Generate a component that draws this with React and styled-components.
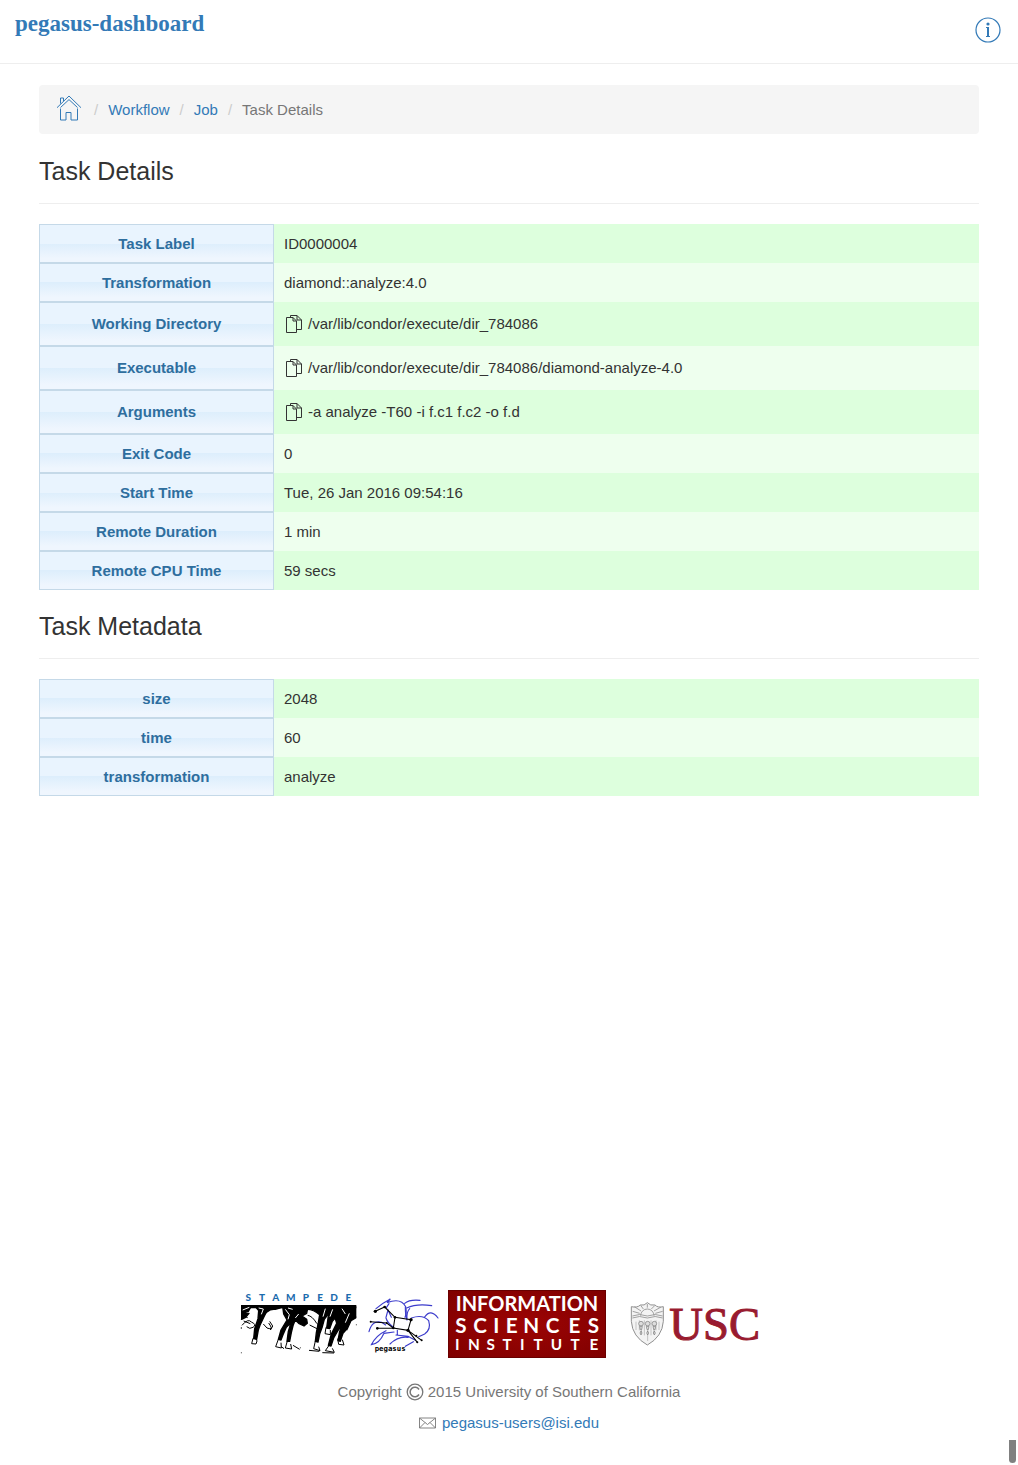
import React from "react";
import styled, { createGlobalStyle } from "styled-components";

const GlobalStyle = createGlobalStyle`
  *, *::before, *::after { box-sizing: border-box; }
  body {
    margin: 0;
    background: #fff;
    color: #333;
    font: 15px/20px "Liberation Sans", Arial, sans-serif;
  }
  a { color: #337ab7; text-decoration: none; }
  a:hover { text-decoration: underline; }
`;

const Page = styled.div`
  display: flex;
  flex-direction: column;
  min-height: 100vh;
`;

const Header = styled.header`
  display: flex;
  justify-content: space-between;
  align-items: flex-start;
  height: 64px;
  padding: 12px 15px;
  border-bottom: 1px solid #eee;
`;

const Brand = styled.a`
  font: bold 23px/24px "Liberation Serif", serif;
`;

const IconButton = styled.button`
  display: inline-flex;
  align-items: center;
  justify-content: center;
  width: ${(p) => p.$size}px;
  height: ${(p) => p.$size}px;
  padding: 0;
  border: 0;
  background: none;
  color: ${(p) => p.$color || "inherit"};
  cursor: pointer;
`;

const HeaderAction = styled.div`
  display: flex;
  padding-top: 3px;
`;

const Main = styled.main`
  flex: 1;
  padding: 21px 39px;
`;

const Breadcrumbs = styled.ol`
  display: flex;
  align-items: center;
  min-height: 49px;
  margin: 0 0 1px;
  padding: 8px 15px;
  list-style: none;
  background: #f5f5f5;
  border-radius: 4px;
`;

const Crumb = styled.li`
  display: flex;
  align-items: center;
  color: #777;

  & + &::before {
    content: "/";
    padding: 0 10px;
    color: #ccc;
  }
`;

const HomeLink = styled.a`
  display: flex;
  justify-content: center;
  width: 30px;
  padding-bottom: 4px;
`;

const SectionTitle = styled.h2`
  margin: 0 0 20px;
  padding: 22px 0 18px;
  border-bottom: 1px solid #eee;
  font-size: 25px;
  line-height: 28px;
  font-weight: 500;
`;

const Table = styled.table`
  width: 100%;
  table-layout: fixed;
  border-collapse: separate;
  border-spacing: 0;
`;

const Row = styled.tr`
  height: 39px;
  background: #eeffee;
  &:nth-child(odd) { background: #ddffdd; }
`;

const Label = styled.th`
  width: 25%;
  padding: 9px 10px;
  border: 1px solid #c5d9e8;
  background: linear-gradient(#e9f4fe 0 50%, #ddeefc 50%, #eff6fe 90%);
  color: #2e6e9e;
  line-height: 18px;
`;

const Value = styled.td`
  padding: 0 10px;
`;

const Copyable = styled.div`
  display: flex;
  align-items: center;
  gap: 4px;
  min-height: 44px;
`;

const Footer = styled.footer`
  display: flex;
  flex-direction: column;
  align-items: center;
  padding-bottom: 27px;
  color: #777;
`;

const Logos = styled.div`
  display: flex;
  gap: 8px;
  margin-bottom: 18px;
  svg { display: block; }
`;

const FooterLine = styled.div`
  display: flex;
  align-items: center;
  gap: ${(p) => p.$gap}px;
  height: 31px;
`;

const ScrollThumb = styled.div`
  position: fixed;
  right: 2px;
  bottom: 2px;
  width: 7px;
  height: 23px;
  border-radius: 0 0 4px 4px;
  background: #808080;
`;

const HomeIcon = () => (
  <svg width="26" height="26" viewBox="0 0 26 26" fill="none" stroke="currentColor" aria-hidden="true">
    <path d="M1 12.700 13 1l12 11.700M4.500 12.500 13 4.600l8.500 7.900M4.500 8.600V3h3v3M4.500 13.500v11.500h5.500v-7.500h5v7.500h6.500V13.500" />
  </svg>
);

const InfoIcon = () => (
  <svg width="26" height="26" viewBox="0 0 26 26" fill="none" stroke="currentColor" aria-hidden="true">
    <circle cx="13" cy="13" r="12" strokeWidth="1.200" />
    <circle cx="13" cy="7" r="1.600" fill="currentColor" stroke="none" />
    <path d="M11 10.500h2.200M11 19.500h4" />
    <path d="M13 10v9.500" strokeWidth="2" />
  </svg>
);

const CopyIcon = () => (
  <svg width="18" height="20" viewBox="0 0 18 20" fill="none" stroke="currentColor" aria-hidden="true">
    <path d="M1.500 3.500h6.500l3.500 3.500v11.500h-10zM8 3.500V7h3.500M5.500 3.500v-2h6.500l4.500 4.500v9.500h-5M12 1.500V6h4.500" />
  </svg>
);

const CopyrightIcon = () => (
  <svg width="18" height="18" viewBox="0 0 18 18" fill="none" stroke="currentColor" role="img" aria-label="Copyright sign">
    <circle cx="9" cy="9" r="7.800" strokeWidth="1.300" />
    <path d="M13 6.500A4.800 4.800 0 1 0 13 11.500" strokeWidth="1.500" />
  </svg>
);

const MailIcon = () => (
  <svg width="17" height="12" viewBox="0 0 17 12" fill="none" stroke="currentColor" strokeWidth="0.900" aria-hidden="true">
    <path d="M.5 1h16v10H.5zM.5 1l8 6.500 8-6.500M.5 11 6 5.500M16.500 11 11 5.500" />
  </svg>
);

const StampedeLogo = () => (
  <svg width="120" height="68" viewBox="6 0 360 204" role="img" aria-label="Stampede">
    <text x="31 72 113 158 204 246 288 331" y="33" textAnchor="middle" fontFamily="Lato, sans-serif" fontWeight="900" fontSize="30" fill="#1c6cae">STAMPEDE</text>
    <path d="M9 45h346v10H9z" />
    <g fill="#000" stroke="#000" strokeWidth="4" strokeLinejoin="round">
      <path d="M11 50h28l-8 14-14 4 16 2-10 12-12 6z" />
      <path d="M52 50h54q-18 8-28 30l-12 26-5 14-5 28-9-2 3-30 10-30 2-24z" />
      <path d="M106 50h34q-16 5-28 8-14-2-24 7z" />
      <path d="M134 50h76l-4 20-14 8 14 10 2 12-10 8-16-8-10-10-6 14-6 24-5 26-8 0 4-30 8-26-14 14-10 22-6 16-8-2 8-28 18-30-10-18z" />
      <path d="M205 50h90l-18 14-18 24-6 22-8 22-5 24-8-2 3-26 6-30 4-24q-18-16-38-16z" />
      <path d="M275 50h30l-6 26-16 18-8 22-9-2 4-30z" />
      <path d="M296 50h57v34l-14 8-10 22-14 16-8 24-7-2 5-28 14-26-18 22-14 24-8 24-8-2 9-34 16-32-6-20z" />
    </g>
    <g fill="none" stroke="#fff" strokeWidth="3">
      <path d="M14 60l20-8M62 54l14 3-6 16M142 58l12 16-4 14M150 54l14 4M172 84l10-12M262 56l-7 24M284 58l-8 22M312 56l10 16M334 70l-12 28" />
    </g>
    <g fill="none" stroke="#000" strokeWidth="3">
      <path d="M10 88q8-12 19-5M12 106q18-22 28-10 18 8 5 16-10 7-19-2M17 93l20 8M76 102l11 12q15 6 17-6l-9-14M92 99q14 20 4 20" />
      <path d="M45 145l-4 16 13 1 3-9-3-9M121 148l-8 22 17 4-1-16M148 153l-6 21 19 3-3-15M232 153l-5 23 19 6-4-12M299 146l3 17 16 2-5-16M264 112l-3 19 16 3 0-14M276 162l-14 20 27 5-6-12" />
      <path d="M209 76q14 2 27 24l15 12M215 105l24 12 12-6M130 170l8 6M165 166l20 12M213 181l31 3M253 188l35 1M338 79l17 2" />
    </g>
    <circle cx="10" cy="188" r="1.500" />
    <circle cx="10" cy="114" r="2" />
    <circle cx="187" cy="173" r="1.500" />
    <circle cx="355" cy="104" r="1.500" />
    <circle cx="327" cy="119" r="2" />
  </svg>
);

const PegasusLogo = () => (
  <svg width="72" height="68" viewBox="12 0 216 204" role="img" aria-label="Pegasus">
    <g fill="none" stroke="#3c3ccc" strokeWidth="3.500" strokeLinecap="round">
      <path d="M36 56Q54 40 79 27l-10 11q42-16 56 12 4 20-2 32M67 53l8-12" />
      <path d="M122 40q14-12 46-9M128 54q30-14 75-7M124 52q0 26 5 38M137 56q-10 10-8 32" />
      <path d="M142 84q34-12 52 8 8 26-12 40l-18 8M182 81q18-26 40 3" />
      <path d="M66 82l6-22 10 22M66 84q4 14 20 26M15 125q10-36 38-28l12 8M66 122q-30 14-44 42 24-2 38-34l30-4M100 121v14M96 135l36 4 22 12M78 162q24-24 54-20M124 169l24-14" />
    </g>
    <g fill="none" stroke="#000" strokeWidth="3.200">
      <path d="M34 64l28-13 31 31 48 7-9 32-44-7 5-32M20 95l48 4 20 15-48 1M132 121l28 36M132 121l41 30" />
    </g>
    {[[34, 64, 5], [62, 51, 4], [93, 82, 4], [141, 89, 5], [88, 114, 4], [132, 121, 5], [68, 99, 3], [20, 95, 3], [40, 115, 4], [160, 157, 3], [173, 151, 3], [157, 137, 3]].map(([x, y, r]) => (
      <circle key={`${x}-${y}`} cx={x} cy={y} r={r} />
    ))}
    <text x="32" y="183" fontFamily="DejaVu Sans Mono, monospace" fontWeight="700" fontSize="22">pegasus</text>
  </svg>
);

const IsiLogo = () => (
  <svg width="158" height="68" viewBox="0 0 474 204" role="img" aria-label="Information Sciences Institute">
    <defs>
      <radialGradient id="isiRed" cx="50%" cy="50%" r="70%">
        <stop offset="0" stopColor="#9c0404" />
        <stop offset="1" stopColor="#800000" />
      </radialGradient>
    </defs>
    <rect width="474" height="204" fill="#6a0000" />
    <rect x="3" y="3" width="468" height="198" fill="url(#isiRed)" />
    <g fill="#fff" fontFamily="Lato, sans-serif" fontWeight="700" textAnchor="middle">
      <text x="237" y="64" fontSize="60">INFORMATION</text>
      <text x="39 96 145 191 250 314 379 436" y="129" fontSize="62">SCIENCES</text>
      <text x="28 78 128 177 223 270 325 381 438" y="181" fontSize="46">INSTITUTE</text>
    </g>
  </svg>
);

const UscLogo = () => (
  <svg width="164" height="68" viewBox="-30 -15 492 204" role="img" aria-label="USC">
    <g fill="none" stroke="#909090" strokeWidth="2.500">
      <path d="M22 35q18 4 27-5 12 3 21-7 9 10 23 7 8 9 25 5v44q-3 46-48 71-45-25-48-71z" fill="#f3f3f3" strokeWidth="3" />
      <path d="M25 63q21-9 45 0 24-9 46 0M25 69q21-9 45 0 24-9 46 0M50 62a20 20 0 0 1 40 0M70 38V27M58 42l-8-11M82 42l10-10M51 48l-20-13M90 48l21-12M47 55l-21-6M94 55l22-6" />
      <path d="M52 94v23M71 94v44M90 94v23M36 80v25M105 80v25M46 76v30M96 76v30M61 76v45M81 76v45" strokeWidth="1.500" />
    </g>
    <g fill="#ddd" stroke="#777" strokeWidth="2">
      {[51, 71, 91].map((x) => (
        <g key={x}>
          <circle cx={x} cy="86" r="7" />
          <path d={`M${x - 4} 94h8l-2 10h-4zM${x} 108l3 6-3 6-3-6z`} />
        </g>
      ))}
    </g>
    <text x="136" y="136" fontFamily="Liberation Serif, serif" fontSize="140" fill="#991b2f" stroke="#991b2f" strokeWidth="3">USC</text>
  </svg>
);

const details = [
  ["Task Label", "ID0000004"],
  ["Transformation", "diamond::analyze:4.0"],
  ["Working Directory", "/var/lib/condor/execute/dir_784086", true],
  ["Executable", "/var/lib/condor/execute/dir_784086/diamond-analyze-4.0", true],
  ["Arguments", "-a analyze -T60 -i f.c1 f.c2 -o f.d", true],
  ["Exit Code", "0"],
  ["Start Time", "Tue, 26 Jan 2016 09:54:16"],
  ["Remote Duration", "1 min"],
  ["Remote CPU Time", "59 secs"],
];

const metadata = [
  ["size", "2048"],
  ["time", "60"],
  ["transformation", "analyze"],
];

const copy = (text) => navigator.clipboard?.writeText(text);

function PropertyTable({ title, rows }) {
  return (
    <section>
      <SectionTitle>{title}</SectionTitle>
      <Table>
        <tbody>
          {rows.map(([label, value, copyable]) => (
            <Row key={label}>
              <Label scope="row">{label}</Label>
              <Value>
                {copyable ? (
                  <Copyable>
                    <IconButton type="button" $size={20} aria-label={`Copy ${label}`} onClick={() => copy(value)}>
                      <CopyIcon />
                    </IconButton>
                    {value}
                  </Copyable>
                ) : (
                  value
                )}
              </Value>
            </Row>
          ))}
        </tbody>
      </Table>
    </section>
  );
}

export default function App() {
  return (
    <Page>
      <GlobalStyle />
      <Header>
        <Brand href="#">pegasus-dashboard</Brand>
        <HeaderAction>
          <IconButton type="button" $size={30} $color="#337ab7" aria-label="About">
            <InfoIcon />
          </IconButton>
        </HeaderAction>
      </Header>
      <Main>
        <nav aria-label="Breadcrumb">
          <Breadcrumbs>
            <Crumb><HomeLink href="#" aria-label="Home"><HomeIcon /></HomeLink></Crumb>
            <Crumb><a href="#workflow">Workflow</a></Crumb>
            <Crumb><a href="#job">Job</a></Crumb>
            <Crumb aria-current="page">Task Details</Crumb>
          </Breadcrumbs>
        </nav>
        <PropertyTable title="Task Details" rows={details} />
        <PropertyTable title="Task Metadata" rows={metadata} />
      </Main>
      <Footer>
        <Logos>
          <StampedeLogo />
          <PegasusLogo />
          <IsiLogo />
          <UscLogo />
        </Logos>
        <FooterLine $gap={4}>
          <span>Copyright</span>
          <CopyrightIcon />
          <span>2015 University of Southern California</span>
        </FooterLine>
        <FooterLine $gap={6}>
          <MailIcon />
          <a href="mailto:pegasus-users@isi.edu">pegasus-users@isi.edu</a>
        </FooterLine>
      </Footer>
      <ScrollThumb />
    </Page>
  );
}
